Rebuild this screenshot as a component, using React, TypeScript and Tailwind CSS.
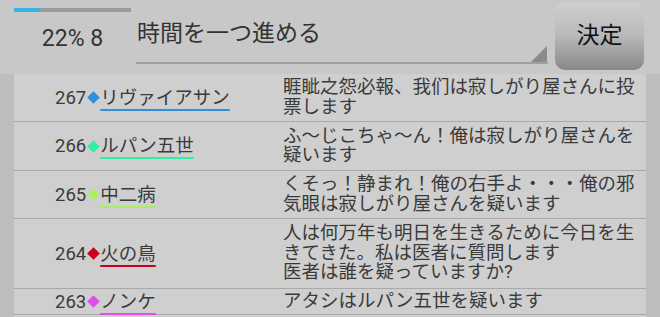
import React from "react";

type Row = {
  num: string;
  name: string;
  msg: string;
  h: string;
  diamond: string;
  deco: string;
};

const rows: Row[] = [
  {
    num: "267",
    name: "リヴァイアサン",
    msg: "睚眦之怨必報、我们は寂しがり屋さんに投票します",
    h: "h-[48px]",
    diamond: "bg-[#3090e0]",
    deco: "decoration-[#3090e0]",
  },
  {
    num: "266",
    name: "ルパン五世",
    msg: "ふ〜じこちゃ〜ん！俺は寂しがり屋さんを疑います",
    h: "h-[49px]",
    diamond: "bg-[#30f0a0]",
    deco: "decoration-[#30f0a0]",
  },
  {
    num: "265",
    name: "中二病",
    msg: "くそっ！静まれ！俺の右手よ・・・俺の邪気眼は寂しがり屋さんを疑います",
    h: "h-[48px]",
    diamond: "bg-[#a8f060]",
    deco: "decoration-[#a8f060]",
  },
  {
    num: "264",
    name: "火の鳥",
    msg: "人は何万年も明日を生きるために今日を生きてきた。私は医者に質問します\n医者は誰を疑っていますか?",
    h: "h-[70px]",
    diamond: "bg-[#c8001e]",
    deco: "decoration-[#c8001e]",
  },
  {
    num: "263",
    name: "ノンケ",
    msg: "アタシはルパン五世を疑います",
    h: "h-[26px]",
    diamond: "bg-[#e050e8]",
    deco: "decoration-[#e050e8]",
  },
];

export default function App() {
  return (
    <div
      className="w-[660px] h-[317px] overflow-hidden bg-[#c8c8c8] flex flex-col text-[#3a3a3a]"
      style={{ fontFamily: 'Roboto, "Noto Sans CJK JP", sans-serif' }}
    >
      {/* Header */}
      <div className="h-[74px] shrink-0 flex items-start">
        <div className="ml-[14px] w-[117px] pt-[8px] flex flex-col">
          <div className="h-[4px] w-full bg-[#9a9a9a] flex">
            <div className="h-full w-[22%] bg-[#33b5e5]" />
          </div>
          <div className="mt-[13px] text-center text-[23px] leading-[27px] text-[#333]">
            22% 8
          </div>
        </div>
        <div className="ml-[5px] w-[412px] h-[64px] relative border-b-2 border-[#a0a0a0]">
          <div className="pt-[22px] pl-[1px] text-[23px] leading-[23px] text-[#333]">
            時間を一つ進める
          </div>
          <svg
            className="absolute right-[1px] bottom-0"
            width="16"
            height="16"
            viewBox="0 0 16 16"
          >
            <polygon points="16,0 16,16 0,16" fill="#8a8a8a" />
          </svg>
        </div>
        <div className="ml-[7px] mt-[2px] w-[89px] h-[68px] rounded-[10px] bg-gradient-to-b from-[#d0d0d0] via-[#b8b8b8] to-[#888888] flex items-center justify-center text-[23px] text-[#111]">
          決定
        </div>
      </div>

      {/* List */}
      <div className="flex flex-1 min-h-0">
        <div className="w-[14px] bg-[#bdbdbd]" />
        <div className="w-[632px] bg-[#cfcfcf] flex flex-col">
          {rows.map((r) => (
            <div
              key={r.num}
              className={`${r.h} shrink-0 flex border-b border-[#a9a9a9]`}
            >
              <div className="w-[269px] pl-[41px] flex items-center text-[18.5px] leading-[20px]">
                <span>{r.num}</span>
                <span
                  className={`inline-block w-[9px] h-[9px] rotate-45 mx-[2.5px] ${r.diamond}`}
                />
                <span
                  className={`underline decoration-2 underline-offset-[5px] ${r.deco}`}
                >
                  {r.name}
                </span>
              </div>
              <div className="w-[360px] flex items-center text-[18.5px] leading-[19.5px] whitespace-pre-line">
                {r.msg}
              </div>
            </div>
          ))}
          <div className="flex-1" />
        </div>
        <div className="w-[14px] bg-[#bdbdbd]" />
      </div>
    </div>
  );
}
